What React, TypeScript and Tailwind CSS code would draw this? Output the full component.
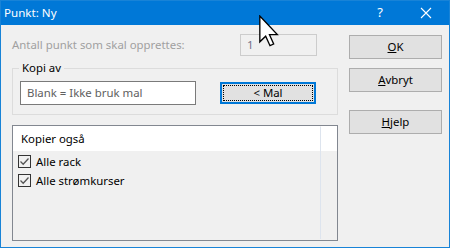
import React from "react";

const font = { fontFamily: '"Noto Sans", "Segoe UI", sans-serif' };

const Check = () => (
  <span className="w-[13px] h-[13px] border border-[#333333] bg-[#f0f0f0] flex items-center justify-center">
    <svg width="11" height="11" viewBox="0 0 11 11">
      <path d="M1.5 5.5 L4.2 8.2 L9.5 2.5" stroke="#555555" strokeWidth="1.3" fill="none" />
    </svg>
  </span>
);

const Button = ({ children, className = "" }: { children: React.ReactNode; className?: string }) => (
  <button className={`w-[93px] h-[24px] bg-[#e1e1e1] border border-[#adadad] text-[11.4px] text-black flex items-center justify-center ${className}`}>
    {children}
  </button>
);

const Cursor = () => (
  <svg className="absolute left-[258px] top-[14px]" width="20" height="32" viewBox="0 0 12 19">
    <path
      d="M0.5 0.5 L0.5 16 L4 12.6 L6.6 18.3 L8.8 17.3 L6.3 11.7 L11 11.7 Z"
      fill="#ffffff"
      stroke="#000000"
      strokeWidth="0.8"
      strokeLinejoin="miter"
    />
  </svg>
);

export default function App() {
  return (
    <div
      className="relative w-[450px] h-[248px] border border-[#1883d7] bg-[#f0f0f0] flex flex-col overflow-hidden"
      style={font}
    >
      {/* title bar */}
      <div className="h-[24px] bg-[#0078d7] flex items-center text-white text-[11.6px] shrink-0">
        <span className="pl-[3px] flex-1">Punkt: Ny</span>
        <span className="w-[46px] text-center text-[13px]">?</span>
        <span className="w-[46px] flex justify-center">
          <svg width="12" height="12" viewBox="0 0 12 12">
            <path d="M1 1 L11 11 M11 1 L1 11" stroke="#ffffff" strokeWidth="1.1" />
          </svg>
        </span>
      </div>

      <div className="flex flex-1 pl-[11px] pr-[7px] pt-[9px] text-[11.4px]">
        {/* left column */}
        <div className="w-[326px] flex flex-col">
          <div className="h-[22px] flex items-center">
            <span className="flex-1 text-[#a0a0a0]">Antall punkt som skal opprettes:</span>
            <div className="w-[77px] h-[22px] border border-[#cccccc] mr-[21px] flex items-center pl-[6px] text-[#76708a]">
              1
            </div>
          </div>

          <div className="relative mt-[12px] h-[47px] border border-[#dcdcdc] flex items-center pl-[7px] pt-[2px]">
            <span className="absolute -top-[10px] left-[6px] px-[3px] bg-[#f0f0f0] text-black">Kopi av</span>
            <div className="w-[176px] h-[24px] bg-white border border-[#7a7a7a] flex items-center pl-[6px] text-[#606060]">
              Blank = Ikke bruk mal
            </div>
            <button className="ml-[24px] w-[96px] h-[22px] bg-[#e1e1e1] border-2 border-[#0078d7] p-[1px]">
              <span className="w-full h-full border border-dotted border-black flex items-center justify-center text-black">
                &lt; Mal
              </span>
            </button>
          </div>

          <div className="mt-[10px] h-[116px] border border-[#828790] flex">
            <div className="flex-1 flex flex-col">
              <div className="h-[25px] bg-white flex items-center pl-[8px] text-black">Kopier også</div>
              <div className="flex flex-col pt-[1px] pl-[5px]">
                <label className="h-[19px] flex items-center gap-[5px] text-black">
                  <Check />
                  Alle rack
                </label>
                <label className="h-[19px] flex items-center gap-[5px] text-black">
                  <Check />
                  Alle strømkurser
                </label>
              </div>
            </div>
            <div className="w-[17px] flex">
              <div className="w-[1px] bg-[#dde4ee] my-[1px]" />
              <div className="flex-1 flex flex-col">
                <div className="h-[25px] bg-white" />
              </div>
            </div>
          </div>
        </div>

        {/* right column */}
        <div className="ml-[11px] flex flex-col pt-[1px]">
          <Button>
            <span><u>O</u>K</span>
          </Button>
          <Button className="mt-[9px]">
            <span><u>A</u>vbryt</span>
          </Button>
          <Button className="mt-[18px]">
            <span><u>H</u>jelp</span>
          </Button>
        </div>
      </div>

      <Cursor />
    </div>
  );
}
